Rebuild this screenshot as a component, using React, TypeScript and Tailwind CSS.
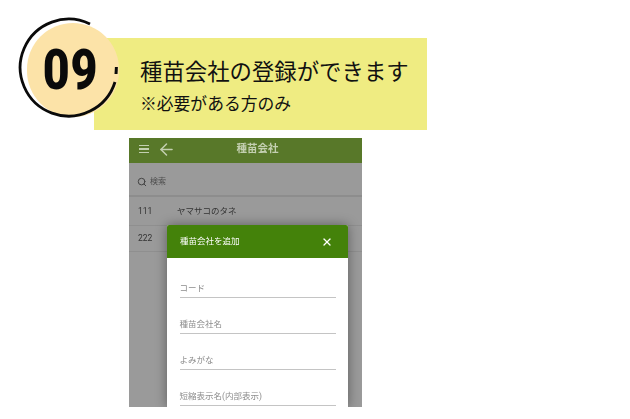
import React from 'react';
import { ArrowLeft, Search, X } from 'lucide-react';

const JP = "font-['Noto_Sans_CJK_JP','Noto_Sans',sans-serif]";
const ROBOTO_JP = "font-['Roboto','Noto_Sans_CJK_JP',sans-serif]";

const ROWS = [
  { code: '111', name: 'ヤマサコのタネ', height: 'h-[29px]' },
  { code: '222', name: '', height: 'h-[26px]' },
];

const FIELDS = ['コード', '種苗会社名', 'よみがな', '短縮表示名(内部表示)'];

// number badge: peach disc with an open black ring around it
const StepBadge: React.FC = () => (
  <div className="absolute left-[16px] top-[15px] w-[106px] h-[105px]">
    <div className="absolute left-[11px] top-[8px] w-[92px] h-[94px] rounded-full bg-[#fce3a8]" />
    <svg className="absolute inset-0" width="106" height="105" viewBox="0 0 106 105" fill="none">
      <path d="M 74 9 A 48.5 48.5 0 1 0 99 67" stroke="#0a0a0a" strokeWidth="2.8" />
      <path d="M100.4 52 L100 59" stroke="#0a0a0a" strokeWidth="3" />
    </svg>
    <div className="absolute left-[8px] top-[8px] w-[92px] h-[94px] flex items-center justify-center">
      <span className="font-['Roboto',sans-serif] font-black text-[56px] leading-none text-[#0a0a0a] scale-x-[0.83] tracking-[1px] whitespace-nowrap">
        09
      </span>
    </div>
  </div>
);

const Dialog: React.FC = () => (
  <div className="absolute left-[38px] top-[87px] w-[181px] bottom-0 bg-white shadow-[0_0_12px_rgba(0,0,0,0.4)] rounded-t-[2px]">
    <div className="h-[33px] bg-[#44820a] flex items-center justify-between pl-[13px] pr-[15px] rounded-t-[2px]">
      <span className="text-[8.5px] text-white">種苗会社を追加</span>
      <X className="w-[12px] h-[12px] text-white" strokeWidth={2.6} />
    </div>
    <div className="px-[12.5px] pt-[24px] flex flex-col gap-[20px]">
      {FIELDS.map(f => (
        <div key={f} className="h-[16px] border-b border-[#c4c4c4] text-[8.5px] leading-[12px] text-[#8c8c8c]">
          {f}
        </div>
      ))}
    </div>
  </div>
);

const App: React.FC = () => {
  return (
    <div className={`relative w-[630px] h-[419px] bg-white overflow-hidden ${JP}`}>
      <StepBadge />

      <div className="pt-[38px] pl-[94px]">
        <div className="w-[333px] h-[92px] bg-[#efec82] pl-[46px] pt-[15px] text-[#111]">
          <h1 className="text-[22.4px] leading-[34px] font-normal whitespace-nowrap">種苗会社の登録ができます</h1>
          <p className="text-[16.8px] leading-[24px] mt-[4px] whitespace-nowrap">※必要がある方のみ</p>
        </div>
      </div>

      <div className={`ml-[129px] mt-[8px] w-[233px] h-[269px] relative bg-[#9a9a9a] overflow-hidden blur-[0.35px] ${ROBOTO_JP}`}>
        <div className="h-[25px] bg-[#587829] flex items-center relative text-[#c3cfb0] pb-[3px]">
          <div className="ml-[10px] w-[10px] flex flex-col gap-[2px]">
            <div className="h-[1.5px] bg-[#c3cfb0]" />
            <div className="h-[1.5px] bg-[#c3cfb0]" />
            <div className="h-[1.5px] bg-[#c3cfb0]" />
          </div>
          <ArrowLeft className="ml-[8px] w-[19px] h-[19px]" strokeWidth={1.9} />
          <span className="absolute left-[24px] right-0 text-center text-[10.5px] font-bold">種苗会社</span>
        </div>
        <div className="h-[34px] border-b-2 border-[#8d8d8d] flex items-center pl-[8px] pt-[6px] gap-[3px] text-[#444]">
          <Search className="w-[10px] h-[10px]" strokeWidth={2.4} />
          <span className="text-[8px] text-[#4c4c4c]">検索</span>
        </div>
        {ROWS.map(r => (
          <div key={r.code} className={`${r.height} border-b border-[#8f8f8f] flex items-center pl-[9px] text-[8.5px] text-[#333]`}>
            <span className="w-[39px]">{r.code}</span>
            <span>{r.name}</span>
          </div>
        ))}
        <Dialog />
      </div>
    </div>
  );
};

export default App;
